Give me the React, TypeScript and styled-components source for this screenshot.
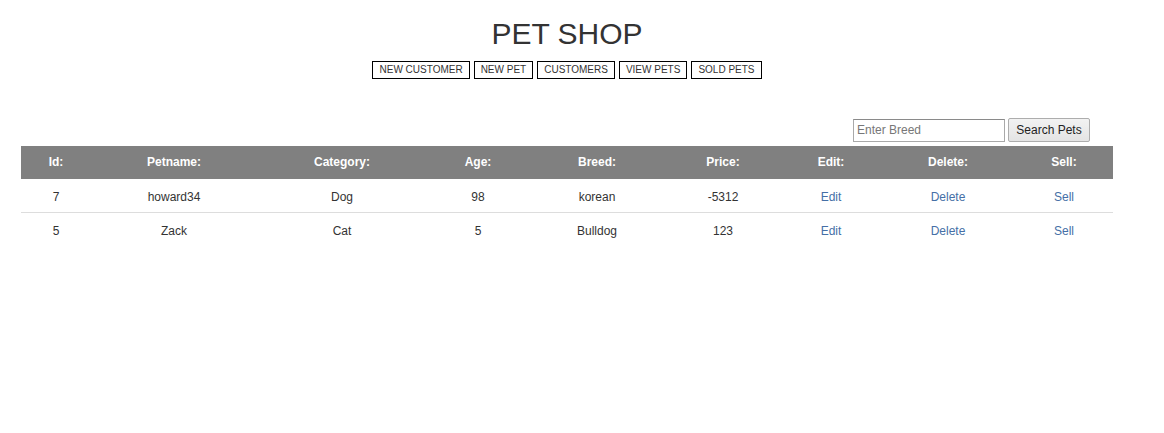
import React from "react";
import styled, { createGlobalStyle } from "styled-components";

const GlobalStyle = createGlobalStyle`
  html, body { margin: 0; padding: 0; background: #fff; }
  body { font-family: "Liberation Sans", Arial, sans-serif; color: #333; }
`;

const Page = styled.div`
  display: flex;
  flex-direction: column;
  align-items: center;
  width: 1134px;
`;

const Title = styled.h1`
  margin: 17px 0 0;
  font-size: 30px;
  line-height: 34px;
  font-weight: normal;
  color: #333;
`;

const Nav = styled.nav`
  display: flex;
  gap: 4px;
  margin-top: 10px;
`;

const NavButton = styled.a`
  display: block;
  border: 1px solid #000;
  padding: 0 6px;
  font-size: 10px;
  line-height: 16px;
  color: #333;
  text-decoration: none;
  text-transform: uppercase;
  cursor: pointer;
`;

const Content = styled.div`
  width: 1092px;
  margin-top: 39px;
`;

const SearchRow = styled.form`
  display: flex;
  justify-content: flex-end;
  align-items: center;
  gap: 3px;
  padding-right: 23px;
  margin-bottom: 4px;
  height: 24px;
`;

const SearchInput = styled.input`
  box-sizing: border-box;
  width: 152px;
  height: 23px;
  padding: 1px 3px;
  border: 1px solid #a9a9a9;
  border-top-color: #8a8a8a;
  font-family: "Liberation Sans", Arial, sans-serif;
  font-size: 12px;
  color: #333;
  outline: none;
  &::placeholder { color: #777; }
`;

const SearchButton = styled.button`
  box-sizing: border-box;
  width: 82px;
  height: 24px;
  padding: 0 6px;
  border: 1px solid #adadad;
  border-radius: 2px;
  background: linear-gradient(#f2f2f2, #e4e4e4);
  font-family: "Liberation Sans", Arial, sans-serif;
  font-size: 12px;
  color: #222;
`;

const Table = styled.table`
  width: 1092px;
  border-collapse: collapse;
  table-layout: fixed;
  font-size: 12px;
`;

const HeadCell = styled.th`
  background: #808080;
  color: #fff;
  font-weight: bold;
  text-align: center;
  padding: 8px 0;
  line-height: 17px;
`;

const Row = styled.tr`
  & + & td { border-top: 1px solid #ddd; }
`;

const Cell = styled.td`
  text-align: center;
  padding: 10px 0 6px;
  line-height: 17px;
  color: #333;
`;

const ActionLink = styled.a`
  color: #456fa6;
  text-decoration: none;
  cursor: pointer;
`;

const columns = [
  { label: "Id:", width: 70 },
  { label: "Petname:", width: 166 },
  { label: "Category:", width: 170 },
  { label: "Age:", width: 102 },
  { label: "Breed:", width: 136 },
  { label: "Price:", width: 116 },
  { label: "Edit:", width: 100 },
  { label: "Delete:", width: 134 },
  { label: "Sell:", width: 98 },
];

const pets = [
  { id: 7, name: "howard34", category: "Dog", age: 98, breed: "korean", price: -5312 },
  { id: 5, name: "Zack", category: "Cat", age: 5, breed: "Bulldog", price: 123 },
];

const navItems = ["New Customer", "New Pet", "Customers", "View Pets", "Sold Pets"];

export default function App() {
  return (
    <>
      <GlobalStyle />
      <Page>
        <Title>PET SHOP</Title>
        <Nav>
          {navItems.map((n) => (
            <NavButton key={n}>{n}</NavButton>
          ))}
        </Nav>
        <Content>
          <SearchRow onSubmit={(e) => e.preventDefault()}>
            <SearchInput placeholder="Enter Breed" />
            <SearchButton type="submit">Search Pets</SearchButton>
          </SearchRow>
          <Table>
            <colgroup>
              {columns.map((c) => (
                <col key={c.label} style={{ width: c.width }} />
              ))}
            </colgroup>
            <thead>
              <tr>
                {columns.map((c) => (
                  <HeadCell key={c.label}>{c.label}</HeadCell>
                ))}
              </tr>
            </thead>
            <tbody>
              {pets.map((p) => (
                <Row key={p.id}>
                  <Cell>{p.id}</Cell>
                  <Cell>{p.name}</Cell>
                  <Cell>{p.category}</Cell>
                  <Cell>{p.age}</Cell>
                  <Cell>{p.breed}</Cell>
                  <Cell>{p.price}</Cell>
                  <Cell><ActionLink>Edit</ActionLink></Cell>
                  <Cell><ActionLink>Delete</ActionLink></Cell>
                  <Cell><ActionLink>Sell</ActionLink></Cell>
                </Row>
              ))}
            </tbody>
          </Table>
        </Content>
      </Page>
    </>
  );
}
